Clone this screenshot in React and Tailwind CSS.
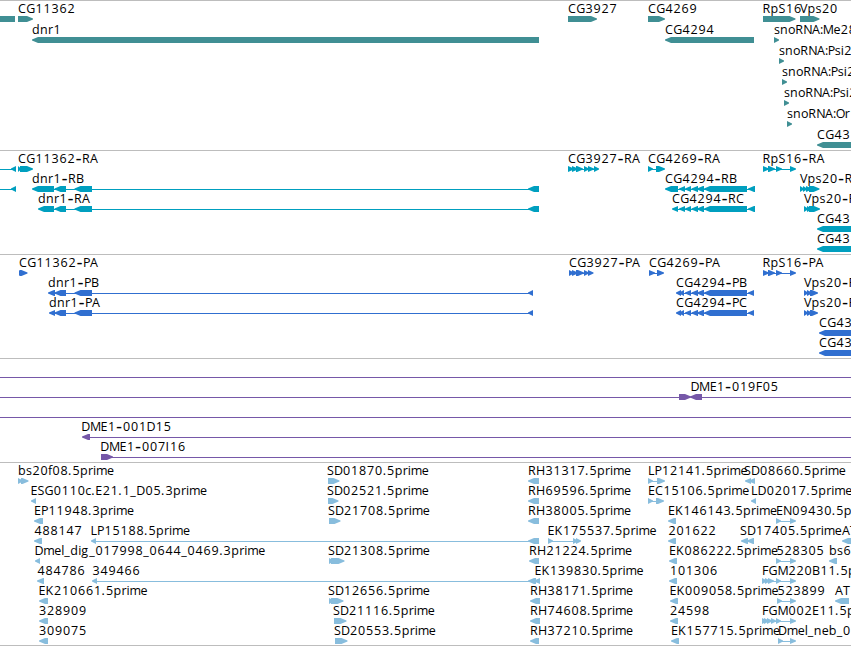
import { Fragment } from "react";

const WIDTH = 851;

// horizontal advance of each character in the label face
const ADVANCE = {
  A: 8, B: 8, C: 8.2, D: 8.7, E: 7, F: 6.6, G: 8.8, H: 9, I: 4, K: 8, L: 6.6,
  M: 10.6, N: 8.8, O: 9, P: 7, R: 8, S: 7, T: 7, V: 7.6,
  b: 8, c: 6, d: 8, e: 7, f: 4, g: 8, i: 3, l: 3, m: 11, n: 8, o: 7.2,
  p: 8, r: 5, s: 6, ".": 4, ":": 2.8, "-": 7, _: 6,
};

// feature: [label, labelX, segments, lines]
// segment: [start, end, direction], direction is "l", "r" or "b" for a plain block
const dnr1Tail = [[54.5, 66, "l"], [74.5, 92, "l"]];
const cg4294Exons = [
  [685, 691, "l"], [691.5, 698, "l"], [697, 704, "l"], [704, 747, "l"],
];
const rpS16 = [[763, 769, "r"], [768, 775, "r"], [776, 782, "r"], [790, 796, "r"]];
const tailPair = (x) => [[x, x + 5, "r"], [790, 796, "r"]];

const tracks = [
  {
    name: "genes",
    color: "#408f94",
    rowClass: "h-[21px]",
    trackClass: "h-[150px]",
    rows: [
      [
        ["", 0, [[0, 15, "b"]]],
        ["CG11362", 18, [[18, 33, "r"]]],
        ["CG3927", 568, [[568, 597, "r"]]],
        ["CG4269", 648, [[648, 665, "r"]]],
        ["RpS16", 762.5, [[763, 795.5, "r"]]],
        ["Vps20", 800, [[800, 819.5, "r"]]],
      ],
      [
        ["dnr1", 32, [[32, 539, "l"]]],
        ["CG4294", 665, [[665, 754, "l"]]],
        ["snoRNA:Me28S", 774, [[774, 779, "r"]]],
      ],
      [["snoRNA:Psi28S", 779, [[779, 784, "r"]]]],
      [["snoRNA:Psi28S", 782, [[782, 787, "r"]]]],
      [["snoRNA:Psi28S", 784, [[784, 789, "r"]]]],
      [["snoRNA:Or", 787, [[787, 792, "r"]]]],
      [["CG43", 817, [[817, 860, "l"]]]],
    ],
  },
  {
    name: "transcripts",
    color: "#009fbf",
    rowClass: "h-5",
    trackClass: "h-[104px]",
    rows: [
      [
        ["", 0, [[11, 16, "l"]], [[0, 12]]],
        ["CG11362-RA", 18, [[18, 21, "r"], [20, 33, "r"]]],
        ["CG3927-RA", 568, [[568, 574, "r"], [572, 578, "r"], [576, 583, "r"], [584, 589, "r"], [588, 594, "r"], [594, 599, "r"]], [[568, 597]]],
        ["CG4269-RA", 648, [[648, 653, "r"], [656, 665, "r"]], [[650, 660]]],
        ["RpS16-RA", 762.5, rpS16, [[765, 793]]],
      ],
      [
        ["", 0, [[11, 16, "l"]], [[0, 12]]],
        ["dnr1-RB", 32, [[32, 54, "l"], ...dnr1Tail, [528, 539, "l"]], [[50, 530]]],
        ["CG4294-RB", 665, [[665, 678, "l"], [679, 685, "l"], ...cg4294Exons, [748, 755, "l"]], [[670, 754]]],
        ["Vps20-RA", 800, [[800, 804, "r"], [803, 807, "r"], [806, 812, "r"], [809, 819.5, "r"]]],
      ],
      [
        ["dnr1-RA", 38, [[38, 54, "l"], ...dnr1Tail, [528, 539, "l"]], [[50, 530]]],
        ["CG4294-RC", 672, [[672, 678, "l"], [679, 685, "l"], ...cg4294Exons, [748, 755, "l"]], [[675, 754]]],
        ["Vps20-RB", 804, [[804, 808, "r"], [807, 812, "r"], [809, 820, "r"]]],
      ],
      [["CG43", 817, [[817, 860, "l"]]]],
      [["CG43", 817, [[817, 860, "l"]]]],
    ],
  },
  {
    name: "proteins",
    color: "#306fd0",
    rowClass: "h-5",
    trackClass: "h-[104px]",
    rows: [
      [
        ["CG11362-PA", 19, [[19, 23, "r"], [20, 27.5, "r"]]],
        ["CG3927-PA", 569, [[569, 574, "r"], [572, 578, "r"], [576, 584, "r"], [584, 589, "r"], [588, 593.5, "r"]], [[569, 590]]],
        ["CG4269-PA", 649, [[649, 655, "r"], [657, 664, "r"]], [[650, 660]]],
        ["RpS16-PA", 762.5, rpS16, [[765, 793]]],
      ],
      [
        ["dnr1-PB", 48, [[48, 55, "l"], ...dnr1Tail, [528, 533, "l"]], [[50, 530]]],
        ["CG4294-PB", 676, [[676, 681, "l"], [679, 684, "l"], ...cg4294Exons, [748, 754, "l"]], [[678, 752]]],
        ["Vps20-PA", 804, [[804, 808, "r"], [807, 812, "r"], [810, 818, "r"]]],
      ],
      [
        ["dnr1-PA", 49, [[49, 55, "l"], ...dnr1Tail, [528, 533, "l"]], [[50, 530]]],
        ["CG4294-PC", 676, [[676, 681, "l"], [679, 684, "l"], ...cg4294Exons, [748, 754, "l"]], [[678, 752]]],
        ["Vps20-PB", 804, [[804, 808, "r"], [807, 812, "r"], [810, 818, "r"]]],
      ],
      [["CG43", 819, [[819, 860, "l"]]]],
      [["CG43", 819, [[819, 860, "l"]]]],
    ],
  },
  {
    name: "bacs",
    color: "#7658a8",
    rowClass: "h-5",
    trackClass: "h-[104px]",
    rows: [
      [["", 0, [], [[0, WIDTH]]]],
      [["DME1-019F05", 690.4, [[679, 691, "r"], [690, 702, "l"]], [[0, 680], [701, WIDTH]]]],
      [["", 0, [], [[0, WIDTH]]]],
      [["DME1-001D15", 81.3, [[82, 90, "l"]], [[88, WIDTH]]]],
      [["DME1-007I16", 100.3, [[101, 113, "r"]], [[108, WIDTH]]]],
    ],
  },
  {
    name: "ests",
    color: "#88bddd",
    rowClass: "h-5",
    trackClass: "h-[183px]",
    rows: [
      [
        ["bs20f08.5prime", 18, [[18, 23, "r"], [21, 28.5, "r"]]],
        ["SD01870.5prime", 327, [[328, 339.5, "r"]]],
        ["RH31317.5prime", 528, [[528, 539, "l"]]],
        ["LP12141.5prime", 648, [[648, 653, "r"], [657, 665, "r"]], [[650, 660]]],
        ["SD08660.5prime", 744, [[745, 751, "l"], [749, 755, "l"]]],
      ],
      [
        ["ESG0110c.E21.1_D05.3prime", 30.5, [[31, 36, "l"]]],
        ["SD02521.5prime", 327, [[328, 338.5, "r"]]],
        ["RH69596.5prime", 528, [[528, 539, "l"]]],
        ["EC15106.5prime", 648, [[648, 653, "r"], [656, 664, "r"]], [[650, 660]]],
        ["LD02017.5prime", 751, [[751, 756, "l"]]],
      ],
      [
        ["EP11948.3prime", 34, [[34, 43, "l"]]],
        ["SD21708.5prime", 328, [[329, 340.5, "r"]]],
        ["RH38005.5prime", 528, [[528, 539, "l"]]],
        ["EK146143.5prime", 668, [[668, 676, "l"]]],
        ["EN09430.5prime", 776, tailPair(776), [[778, 793]]],
      ],
      [
        ["488147", 34, [[34, 42, "l"]]],
        ["LP15188.5prime", 90.5, [[91, 96, "l"], [528, 539, "l"]], [[94, 530]]],
        ["EK175537.5prime", 547.5, [[548, 553, "r"], [573, 578, "r"], [576, 581, "r"]], [[550, 576]]],
        ["201622", 668, [[668, 676, "l"]]],
        ["SD17405.5prime", 740, [[741, 748, "l"], [747, 754, "l"]]],
        ["AT", 842, [[842, 855, "l"]]],
      ],
      [
        ["Dmel_dig_017998_0644_0469.3prime", 34.5, [[35, 40, "l"]]],
        ["SD21308.5prime", 328, [[329, 334, "r"], [331, 344.5, "r"]]],
        ["RH21224.5prime", 529, [[529, 539, "l"]]],
        ["EK086222.5prime", 669, [[669, 677, "l"]]],
        ["528305", 776, tailPair(776), [[778, 793]]],
        ["bs6", 829, [[829, 837, "l"]]],
      ],
      [
        ["484786", 37, [[37, 44, "l"]]],
        ["349466", 92, [[92, 97, "l"], [528, 536, "l"], [534, 540, "l"]], [[94, 530]]],
        ["EK139830.5prime", 534.5, []],
        ["101306", 669.5, [[669, 677, "l"]]],
        ["FGM220B11.5prime", 762, [[762, 767, "r"], [765, 770, "r"], [768, 774, "r"], ...tailPair(776)], [[763, 793]]],
      ],
      [
        ["EK210661.5prime", 38.5, [[39, 48, "l"]]],
        ["SD12656.5prime", 328, [[329, 334, "r"], [331, 343.5, "r"]]],
        ["RH38171.5prime", 530, [[530, 540, "l"]]],
        ["EK009058.5prime", 669.5, [[670, 678, "l"]]],
        ["523899", 777, tailPair(777), [[778, 793]]],
        ["AT", 835, [[835, 849, "l"]]],
      ],
      [
        ["328909", 38.5, [[39, 48, "l"]]],
        ["SD21116.5prime", 333, [[334, 346.5, "r"]]],
        ["RH74608.5prime", 530, [[530, 540, "l"]]],
        ["24598", 669.5, [[670, 678, "l"]]],
        ["FGM002E11.5prime", 762, [[762, 767, "r"], [764, 769, "r"], [767, 772, "r"], [771, 776, "r"], ...tailPair(776)], [[763, 793]]],
      ],
      [
        ["309075", 38.5, [[39, 48, "l"]]],
        ["SD20553.5prime", 334, [[335, 347.5, "r"]]],
        ["RH37210.5prime", 530, [[530, 539, "l"]]],
        ["EK157715.5prime", 671, [[671, 679, "l"]]],
        ["Dmel_neb_0", 778, tailPair(778), [[780, 793]]],
      ],
    ],
  },
];

function segmentPoints([start, end, dir]) {
  const tip = Math.min(6, end - start);
  if (dir === "l") {
    return `${start},18 ${start},17.6 ${start + tip},15 ${end},15 ${end},21 ${start + tip},21 ${start},18.4`;
  }
  if (dir === "r") {
    return `${start},15 ${end - tip},15 ${end},17.6 ${end},18.4 ${end - tip},21 ${start},21`;
  }
  return `${start},15 ${end},15 ${end},21 ${start},21`;
}

function Label({ text, x }) {
  const xs = [];
  let pos = x;
  for (const ch of text) {
    const digit = ch >= "0" && ch <= "9";
    xs.push(digit ? pos + 0.4 : pos);
    pos += digit ? 8 : ADVANCE[ch];
  }
  const dash = text.indexOf("-");
  if (dash < 0) {
    return <text x={xs.join(" ")} y="12">{text}</text>;
  }
  // the hyphen is wider than the one in the face
  return (
    <text y="12">
      <tspan x={xs.slice(0, dash).join(" ")}>{text.slice(0, dash)}</tspan>
      <tspan x={xs[dash] + 0.4} y="13" className="font-['DejaVu_Sans',sans-serif] text-[17px]">-</tspan>
      <tspan x={xs.slice(dash + 1).join(" ")} y="12">{text.slice(dash + 1)}</tspan>
    </text>
  );
}

function Row({ features, color, className }) {
  return (
    <div className={className}>
      <svg width={WIDTH} height="21" className="block overflow-visible">
        {features.map(([text, x, segments, lines = []], i) => (
          <Fragment key={i}>
            <g fill={color}>
              {lines.map(([from, to]) => (
                <rect key={from} x={from} y="18" width={to - from} height="1" />
              ))}
              {segments.map((segment) => (
                <polygon key={segment[0]} points={segmentPoints(segment)} />
              ))}
            </g>
            {text && <Label text={text} x={x} />}
          </Fragment>
        ))}
      </svg>
    </div>
  );
}

export default function App() {
  return (
    <main className="flex h-[646px] w-[851px] flex-col overflow-hidden bg-white font-['Open_Sans','Noto_Sans',sans-serif] text-[12.5px] text-black">
      {tracks.map((track) => (
        <section
          key={track.name}
          className={`shrink-0 border-t border-[#bdbdbd] ${track.trackClass}`}
        >
          {track.rows.map((features, i) => (
            <Row key={i} features={features} color={track.color} className={track.rowClass} />
          ))}
        </section>
      ))}
      <div className="h-px shrink-0 bg-[#bdbdbd]" />
    </main>
  );
}
